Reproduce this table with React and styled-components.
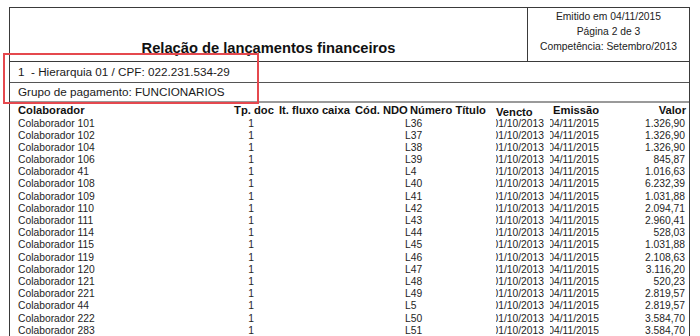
import React from "react";
import styled, { createGlobalStyle } from "styled-components";

const GlobalStyle = createGlobalStyle`
  html, body {
    margin: 0;
    padding: 0;
    background: #ffffff;
    overflow: hidden;
  }
  body {
    font-family: "Liberation Sans", Arial, Helvetica, sans-serif;
    color: #161616;
  }
`;

const Sheet = styled.div`
  position: relative;
  padding: 7px 0 0 9px;
  width: 700px;
  box-sizing: border-box;
`;

const Report = styled.div`
  width: 681px;
  box-sizing: border-box;
  border: 1px solid #3a3a3a;
  padding-bottom: 20px;
`;

const Header = styled.div`
  display: grid;
  grid-template-columns: 1fr 162px;
  height: 53px;
  border-bottom: 1px solid #3a3a3a;
`;

const Title = styled.h1`
  margin: 0;
  display: flex;
  align-items: flex-end;
  justify-content: center;
  padding-bottom: 4px;
  font-size: 14.7px;
  font-weight: bold;
  line-height: 17px;
  color: #111;
`;

const Info = styled.div`
  border-left: 1px solid #3a3a3a;
  padding-top: 1px;
  display: flex;
  flex-direction: column;
  align-items: center;
  font-size: 10.3px;
  line-height: 15px;
  color: #222;
`;

const GroupRow = styled.div`
  height: ${(p) => p.$h}px;
  line-height: ${(p) => p.$h}px;
  padding-left: 8px;
  font-size: 11.7px;
  white-space: pre;
  color: #1a1a1a;
  border-bottom: ${(p) => (p.$heavy ? "2px solid #9a9a9a" : "1px solid #555")};
`;

const Table = styled.div`
  padding: 0 2px 0 8px;
`;

const TableRow = styled.div`
  display: grid;
  grid-template-columns: 212px 48px 75px 50px 91px 52px 56px 1fr;
  height: ${(p) => p.$h}px;
  line-height: ${(p) => p.$h}px;
  font-size: ${(p) => (p.$head ? "11.2px" : "10.3px")};
  font-weight: ${(p) => (p.$head ? "bold" : "normal")};
  color: ${(p) => (p.$head ? "#111" : "#1e1e1e")};
`;

const Cell = styled.div`
  white-space: nowrap;
  text-align: ${(p) => p.$align || "left"};
  padding-left: ${(p) => p.$pl || 0}px;
  padding-right: ${(p) => p.$pr || 0}px;
  padding-top: ${(p) => p.$pt || 0}px;
`;

const ClipCell = styled.div`
  display: flex;
  justify-content: flex-end;
  overflow: hidden;
  white-space: nowrap;
  margin-left: ${(p) => p.$ml}px;
  margin-right: ${(p) => p.$mr}px;
`;

const Highlight = styled.div`
  position: absolute;
  left: 3px;
  top: 53px;
  width: 256px;
  height: 51px;
  box-sizing: border-box;
  border: 2px solid #e5484e;
  pointer-events: none;
`;

const rows = [
  ["101", "L36", "1.326,90"],
  ["102", "L37", "1.326,90"],
  ["104", "L38", "1.326,90"],
  ["106", "L39", "845,87"],
  ["41", "L4", "1.016,63"],
  ["108", "L40", "6.232,39"],
  ["109", "L41", "1.031,88"],
  ["110", "L42", "2.094,71"],
  ["111", "L43", "2.960,41"],
  ["114", "L44", "528,03"],
  ["115", "L45", "1.031,88"],
  ["119", "L46", "2.108,63"],
  ["120", "L47", "3.116,20"],
  ["121", "L48", "520,23"],
  ["221", "L49", "2.819,57"],
  ["44", "L5", "2.819,57"],
  ["222", "L50", "3.584,70"],
  ["283", "L51", "3.584,70"],
];

export default function App() {
  return (
    <>
      <GlobalStyle />
      <Sheet>
        <Report>
          <Header>
            <Title>Relação de lançamentos financeiros</Title>
            <Info>
              <span>Emitido em 04/11/2015</span>
              <span>Página 2 de 3</span>
              <span>Competência: Setembro/2013</span>
            </Info>
          </Header>
          <GroupRow $h={20}>{"1  - Hierarquia 01 / CPF: 022.231.534-29"}</GroupRow>
          <GroupRow $h={18} $heavy>Grupo de pagamento: FUNCIONARIOS</GroupRow>
          <Table>
            <TableRow $head $h={14.5}>
              <Cell>Colaborador</Cell>
              <Cell $align="center">Tp. doc</Cell>
              <Cell $pl={1}>It. fluxo caixa</Cell>
              <Cell $pl={2}>Cód. NDO</Cell>
              <Cell $pl={7}>Número Título</Cell>
              <Cell $pl={2} $pt={2}>Vencto</Cell>
              <Cell $pl={7}>Emissão</Cell>
              <Cell $align="right" $pr={1}>Valor</Cell>
            </TableRow>
            {rows.map(([id, code, value]) => (
              <TableRow key={id + code} $h={12.2}>
                <Cell>Colaborador {id}</Cell>
                <Cell $align="center" $pr={6}>1</Cell>
                <Cell />
                <Cell />
                <Cell $pl={2}>{code}</Cell>
                <ClipCell $ml={2} $mr={2}>
                  <span>01/10/2013</span>
                </ClipCell>
                <ClipCell $ml={4} $mr={3}>
                  <span>04/11/2015</span>
                </ClipCell>
                <Cell $align="right" $pr={2}>{value}</Cell>
              </TableRow>
            ))}
          </Table>
        </Report>
        <Highlight />
      </Sheet>
    </>
  );
}
